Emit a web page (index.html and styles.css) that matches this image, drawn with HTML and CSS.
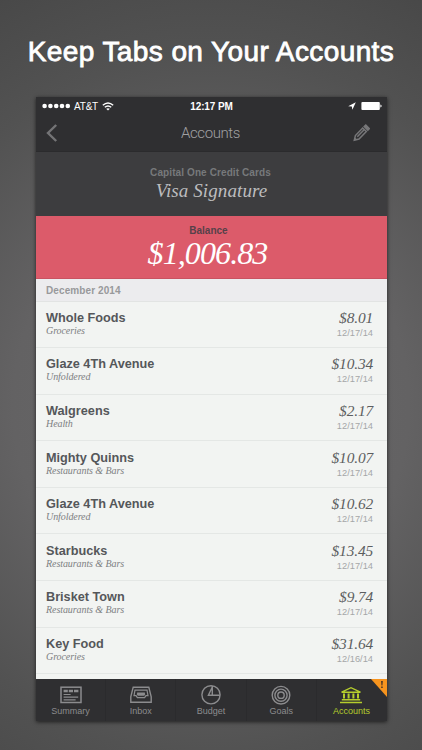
FILE: index.html
```html
<!DOCTYPE html>
<html lang="en">
<head>
<meta charset="utf-8">
<title>Accounts</title>
<link rel="stylesheet" href="styles.css">
</head>
<body>
<h1 class="headline">Keep Tabs on Your Accounts</h1>
<main class="phone">
  <header class="top">
    <div class="status">
      <div class="carrier">
        <svg width="29" height="6" viewBox="0 0 29 6" fill="#fff"><circle cx="2.6" cy="3" r="2.3"/><circle cx="8.4" cy="3" r="2.3"/><circle cx="14.2" cy="3" r="2.3"/><circle cx="20" cy="3" r="2.3"/><circle cx="25.8" cy="3" r="2.3"/></svg>
        <span class="att">AT&amp;T</span>
        <svg width="12" height="9" viewBox="0 0 12 9" fill="none" stroke="#fff" stroke-width="1.4"><path d="M.8 3.2Q6-1.4 11.2 3.2M2.8 5.3Q6 2.5 9.2 5.3"/><path d="M6 8.6 4.2 6.8Q6 5.5 7.8 6.8Z" fill="#fff" stroke="none"/></svg>
      </div>
      <span class="clock">12:17 PM</span>
      <div class="power">
        <svg width="8" height="8" viewBox="0 0 8 8" fill="#fff"><path d="M7.8.2.2 4.2 3.8 4.4 4.4 7.8Z"/></svg>
        <svg width="21" height="10" viewBox="0 0 21 10"><rect x=".4" y="1" width="18.4" height="8" rx="1" fill="#fff"/><path d="M19.4 3.4q1.2.4 1.2 1.6t-1.2 1.6Z" fill="#fff"/></svg>
      </div>
    </div>
    <nav class="nav">
      <svg width="12" height="18" viewBox="0 0 12 18" fill="none" stroke="#747476" stroke-width="2.4"><path d="M10.2 1 2 9l8.2 8"/></svg>
      <span class="title">Accounts</span>
      <svg width="17" height="18" viewBox="0 0 17 18" fill="none" stroke="#777779" stroke-width="1.5"><path d="M1.3 16.2 2.4 11.6 9.7 4l3.6 3.5L6 15ZM4.3 12.8l6.8-7"/><path d="m11.2 2.6 1.6-1.5 3.5 3.5-1.5 1.5Z" fill="#777779"/><path d="M1.2 16.5 2 13.5 4.1 15.6Z" fill="#777779" stroke="none"/></svg>
    </nav>
  </header>
  <section class="card">
    <div class="bank">Capital One Credit Cards</div>
    <div class="product">Visa Signature</div>
  </section>
  <section class="balance">
    <div class="label">Balance</div>
    <div class="total">$1,006.83</div>
  </section>
  <div class="month">December 2014</div>
  <ul class="list">
    <li><div><div class="name">Whole Foods</div><div class="cat">Groceries</div></div><div class="right"><div class="sum">$8.01</div><div class="date">12/17/14</div></div></li>
    <li><div><div class="name">Glaze 4Th Avenue</div><div class="cat">Unfoldered</div></div><div class="right"><div class="sum">$10.34</div><div class="date">12/17/14</div></div></li>
    <li><div><div class="name">Walgreens</div><div class="cat">Health</div></div><div class="right"><div class="sum">$2.17</div><div class="date">12/17/14</div></div></li>
    <li><div><div class="name">Mighty Quinns</div><div class="cat">Restaurants &amp; Bars</div></div><div class="right"><div class="sum">$10.07</div><div class="date">12/17/14</div></div></li>
    <li><div><div class="name">Glaze 4Th Avenue</div><div class="cat">Unfoldered</div></div><div class="right"><div class="sum">$10.62</div><div class="date">12/17/14</div></div></li>
    <li><div><div class="name">Starbucks</div><div class="cat">Restaurants &amp; Bars</div></div><div class="right"><div class="sum">$13.45</div><div class="date">12/17/14</div></div></li>
    <li><div><div class="name">Brisket Town</div><div class="cat">Restaurants &amp; Bars</div></div><div class="right"><div class="sum">$9.74</div><div class="date">12/17/14</div></div></li>
    <li><div><div class="name">Key Food</div><div class="cat">Groceries</div></div><div class="right"><div class="sum">$31.64</div><div class="date">12/16/14</div></div></li>
  </ul>
  <footer class="tabs">
    <div class="tab">
      <svg width="24" height="20" viewBox="0 0 24 20" fill="none" stroke="currentColor"><rect x="2" y="2.2" width="20" height="15.3" stroke-width="1.5"/><path d="M4.6 6.1h4.2m1 0h4.2m1 0h4.4" stroke-width="2.5"/><path d="M4.6 9.5h7M4.6 12.2h14.6M4.6 14.9h12" stroke-width="1.2"/></svg>
      <span>Summary</span>
    </div>
    <div class="tab">
      <svg width="24" height="20" viewBox="0 0 24 20" fill="none" stroke="currentColor" stroke-width="1.4"><path d="M4.2 2.2h15.6l2.4 9.6v5.5H1.8v-5.5Z"/><path d="M6 5.2h12l1 5.4-2 .1-1.4 2H8.4L7 10.7l-2-.1Z" stroke-width="1.2"/><path d="M8.2 7.5h7.6l.4 2-1 1.2H8.8l-1-1.2Z" fill="currentColor" stroke="none"/></svg>
      <span>Inbox</span>
    </div>
    <div class="tab">
      <svg width="24" height="20" viewBox="0 0 24 20" fill="none" stroke="currentColor" stroke-width="1.4"><circle cx="12" cy="9.8" r="9.1"/><path d="M13.3 1v9.3h7.6M13.3 2 9.4 10.3h4.4"/></svg>
      <span>Budget</span>
    </div>
    <div class="tab">
      <svg width="24" height="20" viewBox="0 0 24 20" fill="none" stroke="currentColor" stroke-width="1.4"><circle cx="12" cy="10.2" r="8.8"/><circle cx="12" cy="10.2" r="6.1"/><circle cx="12" cy="10.2" r="3.2"/></svg>
      <span>Goals</span>
    </div>
    <div class="tab active">
      <svg width="24" height="20" viewBox="0 0 24 20" fill="none" stroke="currentColor" stroke-width="1.4"><path d="M2.6 7.2 12 2.7l9.4 4.5Z"/><path d="M5 8.6v5M9.6 8.6v5M14.4 8.6v5M19 8.6v5" stroke-width="2"/><path d="M2.8 14.8h18.4M1 17.6h22" stroke-width="1.5"/></svg>
      <span>Accounts</span>
      <svg class="alert" width="16" height="18" viewBox="0 0 16 18"><path d="M0 0h16v18Z" fill="#f7941e"/><path d="M10.1 2h1.7l-.4 4.6h-.9ZM10.2 7.5h1.5V9h-1.5Z" fill="#433126"/></svg>
    </div>
  </footer>
</main>
</body>
</html>
```
FILE: styles.css
```css
* { box-sizing: border-box; }
body {
  margin: 0;
  width: 422px;
  height: 750px;
  overflow: hidden;
  background: radial-gradient(ellipse 440px 470px at 50% 54%, #6a696a 0%, #636263 45%, #525252 75%, #484848 100%);
  font-family: "Liberation Sans", Arial, sans-serif;
}
.headline {
  margin: 0;
  height: 97px;
  padding-top: 36px;
  font-size: 28px;
  line-height: 32px;
  font-weight: 400;
  text-align: center;
  white-space: nowrap;
  letter-spacing: .4px;
  color: #fff;
  -webkit-text-stroke: .8px #fff;
}
.phone {
  width: 351px;
  height: 624px;
  margin-left: 36px;
  display: flex;
  flex-direction: column;
  background: #f2f4f2;
  box-shadow: 0 1px 4px rgba(0, 0, 0, .65);
}
.top { height: 55px; background: #2f2f31; border-bottom: 1px solid #2b2b2d; flex: none; }
.status {
  height: 18px;
  padding: 0 5px 0 6px;
  display: grid;
  grid-template-columns: 1fr auto 1fr;
  align-items: center;
  color: #fff;
  font-size: 10px;
}
.carrier, .power { display: flex; align-items: center; }
.carrier svg:last-child { margin-left: 4px; }
.att { margin-left: 3px; letter-spacing: -.2px; }
.clock { font-weight: 700; letter-spacing: -.1px; margin-left: -1px; }
.power { justify-content: flex-end; gap: 5px; }
.nav {
  height: 36px;
  padding: 0 17px 0 10px;
  display: flex;
  align-items: center;
  justify-content: space-between;
}
.title { font: 300 15px/20px Roboto, sans-serif; color: #a0a0a2; letter-spacing: -.4px; margin-left: 10px; }
.card { height: 64px; flex: none; background: #3d3d3f; text-align: center; padding-top: 15px; }
.bank { font-size: 10px; line-height: 12px; font-weight: 700; color: #77797b; letter-spacing: .1px; padding-right: 2px; }
.product { font: italic 19px/23px "Liberation Serif", serif; color: #bcbcbe; letter-spacing: .1px; }
.balance { height: 63px; flex: none; background: #dc5b6a; border-bottom: 1px solid #c95361; text-align: center; padding-top: 9px; }
.label { font-size: 10px; line-height: 12px; font-weight: 700; color: #564149; padding-right: 6px; }
.total { font: italic 32px/32px "Liberation Serif", serif; letter-spacing: -.9px; color: #fff; padding-right: 8px; }
.month {
  height: 22.5px;
  flex: none;
  padding-left: 10px;
  background: #ececee;
  font-size: 10px;
  line-height: 23px;
  font-weight: 700;
  color: #98999b;
  letter-spacing: .1px;
  border-bottom: 1px solid #e2e4e3;
}
.list { list-style: none; margin: 0; padding: 0; flex: 1; min-height: 0; }
.list li {
  height: 46.6px;
  padding: 9.4px 14px 0 10px;
  display: flex;
  justify-content: space-between;
  border-bottom: 1px solid #e4e7e5;
}
.name { font-size: 12.7px; line-height: 15px; font-weight: 700; color: #55575a; }
.cat { font: italic 10px/10px "Liberation Serif", serif; letter-spacing: -.08px; color: #7d8082; }
.right { text-align: right; margin-top: -2px; }
.sum { font: italic 15.4px/17px "Liberation Serif", serif; letter-spacing: -.15px; color: #5c5e60; }
.date { font-size: 9.3px; line-height: 11px; color: #a5a7a8; margin-top: 2px; }
.tabs { height: 42px; flex: none; display: flex; background: #2f2f31; }
.tab {
  position: relative;
  flex: 1;
  display: flex;
  flex-direction: column;
  align-items: center;
  padding-top: 6px;
  font-size: 9px;
  line-height: 12px;
  color: #8c8c8e;
  border-right: 1px solid #2b2b2d;
}
.tab.active { color: #b5cd2d; border-right: 0; padding-right: 1px; }
.alert { position: absolute; top: 0; right: 0; }
```
